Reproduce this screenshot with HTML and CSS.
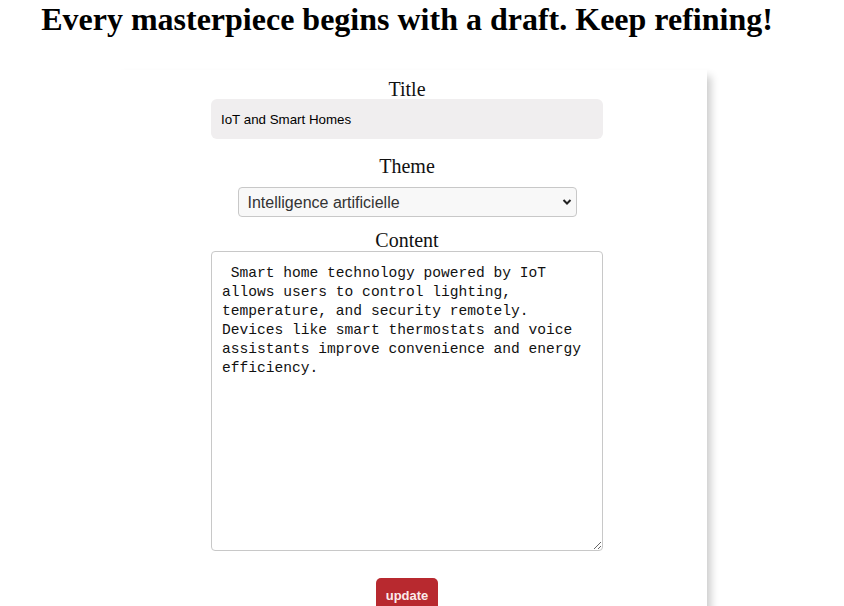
FILE: index.html
```html
<!DOCTYPE html>
<html lang="en">
<head>
<meta charset="utf-8">
<title>Edit article</title>
<link rel="stylesheet" href="styles.css">
</head>
<body>
<div class="page">
  <h1 class="headline">Every masterpiece begins with a draft. Keep refining!</h1>
  <form class="card">
    <label class="label label-title" for="title">Title</label>
    <input class="text-input" id="title" type="text" value="IoT and Smart Homes">
    <label class="label label-theme" for="theme">Theme</label>
    <div class="select-wrap">
      <select class="select" id="theme">
        <option>Intelligence artificielle</option>
      </select>
      <svg class="chevron" width="10" height="8" viewBox="0 0 10 8"><path d="M1.5 2 L5 5.5 L8.5 2" fill="none" stroke="#222" stroke-width="2"/></svg>
    </div>
    <label class="label label-content" for="content">Content</label>
    <textarea class="textarea" id="content"> Smart home technology powered by IoT allows users to control lighting, temperature, and security remotely. Devices like smart thermostats and voice assistants improve convenience and energy efficiency.</textarea>
    <button class="btn" type="button">update</button>
  </form>
</div>
</body>
</html>
```

FILE: styles.css
```css
html, body {
  margin: 0;
  padding: 0;
  background: #fff;
}

.page {
  width: 814px;
}

.headline {
  margin: 0;
  font-family: "Liberation Serif", "Times New Roman", serif;
  font-weight: bold;
  font-size: 32px;
  line-height: 38px;
  text-align: center;
  color: #000;
}

.card {
  width: 600px;
  height: 560px;
  margin: 32px auto 0;
  padding-top: 9px;
  box-sizing: border-box;
  display: flex;
  flex-direction: column;
  align-items: center;
  background: #fff;
  box-shadow: 10px 0 8px -6px rgba(0, 0, 0, 0.2);
}

.label {
  font-family: "Liberation Serif", "Times New Roman", serif;
  font-size: 20px;
  line-height: 20px;
  color: #111;
}

.text-input {
  width: 392px;
  height: 40px;
  box-sizing: border-box;
  border: none;
  border-radius: 6px;
  background: #f0eeef;
  padding: 0 10px;
  font-family: "Liberation Sans", Arial, sans-serif;
  font-size: 13.33px;
  color: #000;
  outline: none;
}

.label-theme {
  margin-top: 17px;
}

.select-wrap {
  position: relative;
  margin-top: 11px;
}

.select {
  display: block;
  width: 339px;
  height: 30px;
  box-sizing: border-box;
  -webkit-appearance: none;
  appearance: none;
  border: 1px solid #c8c8c8;
  border-radius: 4px;
  background: #f8f8f8;
  padding: 0 9px;
  font-family: "Liberation Sans", Arial, sans-serif;
  font-size: 16px;
  color: #333;
}

.chevron {
  position: absolute;
  right: 5px;
  top: 11px;
  pointer-events: none;
}

.label-content {
  margin-top: 13px;
}

.textarea {
  margin-top: 1px;
  width: 392px;
  height: 300px;
  box-sizing: border-box;
  border: 1px solid #c8c8c8;
  border-radius: 4px;
  padding: 12px 10px 10px;
  font-family: "Liberation Mono", "DejaVu Sans Mono", monospace;
  font-size: 14.6px;
  line-height: 19px;
  color: #111;
  background: #fff;
  resize: both;
}

.btn {
  margin-top: 27px;
  height: 34px;
  padding: 0 10px;
  border: none;
  border-radius: 5px;
  background: #b8292f;
  color: #fbeaea;
  font-family: "Liberation Sans", Arial, sans-serif;
  font-weight: bold;
  font-size: 13px;
}
```
